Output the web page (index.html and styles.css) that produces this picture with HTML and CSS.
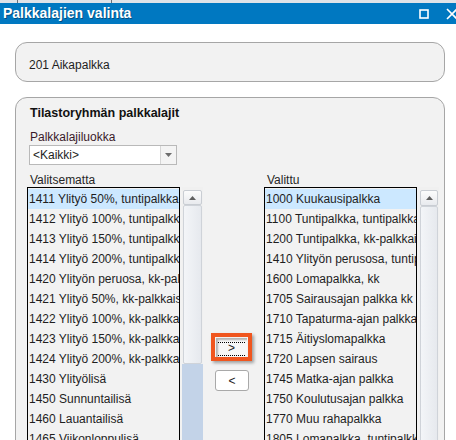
FILE: index.html
```html
<!DOCTYPE html>
<html lang="fi">
<head>
<meta charset="utf-8">
<title>Palkkalajien valinta</title>
<link rel="stylesheet" href="styles.css">
</head>
<body>
<div class="topstrip"><span class="tab tab-a"></span><span class="tab tab-b"></span></div>
<div class="titlebar">
  <span class="title">Palkkalajien valinta</span>
  <div class="winbtns">
    <svg class="ic-max" width="10" height="10" viewBox="0 0 10 10"><rect x="1" y="1" width="8" height="8" fill="none" stroke="#fff" stroke-width="1.6"/></svg>
    <svg class="ic-close" width="12" height="12" viewBox="0 0 12 12"><path d="M1 1 L11 11 M11 1 L1 11" stroke="#fff" stroke-width="1.6" fill="none"/></svg>
  </div>
</div>
<div class="content">
  <div class="group g1"><span class="g1-text">201 Aikapalkka</span></div>
  <div class="group g2">
    <div class="gtitle">Tilastoryhmän palkkalajit</div>
    <div class="label label-class">Palkkalajiluokka</div>
    <div class="combo">
      <span class="combo-text">&lt;Kaikki&gt;</span>
      <span class="combo-btn"><svg width="7" height="4" viewBox="0 0 7 4"><path d="M0 0 H7 L3.5 4 Z" fill="#6d6d6d"/></svg></span>
    </div>
    <div class="picker">
      <div class="pane pane-left">
        <div class="label">Valitsematta</div>
        <div class="listrow">
          <ul class="list">
            <li class="sel">1411 Ylityö 50%, tuntipalkkaiset</li>
            <li>1412 Ylityö 100%, tuntipalkkaiset</li>
            <li>1413 Ylityö 150%, tuntipalkkaiset</li>
            <li>1414 Ylityö 200%, tuntipalkkaiset</li>
            <li>1420 Ylityön peruosa, kk-palkkaiset</li>
            <li>1421 Ylityö 50%, kk-palkkaiset</li>
            <li>1422 Ylityö 100%, kk-palkkaiset</li>
            <li>1423 Ylityö 150%, kk-palkkaiset</li>
            <li>1424 Ylityö 200%, kk-palkkaiset</li>
            <li>1430 Ylityölisä</li>
            <li>1450 Sunnuntailisä</li>
            <li>1460 Lauantailisä</li>
            <li>1465 Viikonloppulisä</li>
          </ul>
          <div class="scroll scroll-left">
            <div class="sb-up"><svg width="7" height="4" viewBox="0 0 7 4"><path d="M0 4 H7 L3.5 0 Z" fill="#606060"/></svg></div>
            <div class="sb-thumb sb-thumb-left"></div>
            <div class="sb-track"></div>
          </div>
        </div>
      </div>
      <div class="movers">
        <div class="highlight">
          <div class="btn btn-add"><span class="focus">&gt;</span></div>
        </div>
        <div class="btn btn-remove">&lt;</div>
      </div>
      <div class="pane pane-right">
        <div class="label">Valittu</div>
        <div class="listrow">
          <ul class="list">
            <li class="sel">1000 Kuukausipalkka</li>
            <li>1100 Tuntipalkka, tuntipalkkaiset</li>
            <li>1200 Tuntipalkka, kk-palkkaiset</li>
            <li>1410 Ylityön perusosa, tuntipalkkaiset</li>
            <li>1600 Lomapalkka, kk</li>
            <li>1705 Sairausajan palkka kk</li>
            <li>1710 Tapaturma-ajan palkka</li>
            <li>1715 Äitiyslomapalkka</li>
            <li>1720 Lapsen sairaus</li>
            <li>1745 Matka-ajan palkka</li>
            <li>1750 Koulutusajan palkka</li>
            <li>1770 Muu rahapalkka</li>
            <li>1805 Lomapalkka, tuntipalkkaiset</li>
          </ul>
          <div class="scroll scroll-right">
            <div class="sb-up"><svg width="7" height="4" viewBox="0 0 7 4"><path d="M0 4 H7 L3.5 0 Z" fill="#606060"/></svg></div>
            <div class="sb-thumb sb-thumb-right"></div>
          </div>
        </div>
      </div>
    </div>
  </div>
</div>
</body>
</html>
```

FILE: styles.css
```css
html, body {
  margin: 0;
  padding: 0;
  width: 456px;
  height: 440px;
  overflow: hidden;
  background: #ffffff;
  font-family: "Liberation Sans", Arial, sans-serif;
  font-size: 12px;
  color: #1e1e1e;
}

.topstrip {
  height: 3px;
  background: #dfe3e8;
  display: flex;
}
.tab {
  width: 1px;
  height: 3px;
  background: #6a6f78;
}
.tab-a { margin-left: 17px; }
.tab-b { margin-left: 93px; }

.titlebar {
  height: 21px;
  background: #0078c1;
  display: flex;
  align-items: center;
  justify-content: space-between;
}
.title {
  margin-left: 3px;
  font-weight: bold;
  font-size: 14px;
  color: #ffffff;
  text-shadow: 1px 1px 0 rgba(0, 0, 0, 0.35);
  line-height: 21px;
}
.winbtns {
  display: flex;
  align-items: center;
  gap: 17px;
  margin-right: -2px;
}
.ic-max { display: block; margin-top: 1px; }
.ic-close { display: block; }

.content {
  height: 398px;
  overflow: hidden;
  padding: 18px 11px 0 15px;
}

.group {
  box-sizing: border-box;
  border: 1px solid #a6a6a6;
  border-radius: 12px;
  background: #f2f2f2;
}
.g1 {
  height: 40px;
  padding: 15px 0 0 13px;
  line-height: 14px;
}

.g2 {
  margin-top: 15px;
  height: 380px;
  padding: 7px 0 0 11px;
}
.gtitle {
  font-weight: bold;
  font-size: 12.5px;
  line-height: 16px;
  margin-left: 3px;
  color: #111;
}
.label {
  line-height: 14px;
  margin-left: 3px;
  color: #262626;
}
.label-class {
  margin-top: 9px;
  color: #3a1a2a;
}

.combo {
  margin-top: 1px;
  margin-left: 2px;
  width: 148px;
  height: 20px;
  box-sizing: border-box;
  border: 1px solid #b9b9b9;
  background: #ffffff;
  display: flex;
  align-items: center;
}
.combo-text {
  flex: 1;
  padding-left: 3px;
  line-height: 18px;
}
.combo-btn {
  width: 15px;
  height: 18px;
  border-left: 1px solid #d6d6d6;
  background: #f4f4f4;
  display: flex;
  align-items: center;
  justify-content: center;
}

.picker {
  margin-top: 8px;
  display: flex;
  align-items: flex-start;
}
.pane-left { width: 176px; }
.pane-right { width: 175px; }

.listrow {
  display: flex;
  align-items: stretch;
}
.list {
  list-style: none;
  margin: 0;
  padding: 1px 0 0 0;
  width: 153px;
  height: 270px;
  box-sizing: border-box;
  border: 1px solid #000000;
  border-bottom: none;
  background: #f2f2f2;
  overflow: hidden;
}
.list li {
  height: 20px;
  line-height: 21px;
  padding-left: 1px;
  white-space: nowrap;
  overflow: hidden;
}
.list li.sel { background: #cce8ff; }

.scroll {
  margin-left: 2px;
  height: 270px;
  display: flex;
  flex-direction: column;
  background: #f0f0f0;
}
.scroll-left { width: 21px; }
.scroll-right { width: 20px; }

.sb-up {
  margin: 3px 1px 0 1px;
  height: 15px;
  box-sizing: border-box;
  border: 1px solid #c9cdd3;
  border-radius: 2px;
  background: linear-gradient(#fcfcfc, #e8eaee);
  display: flex;
  align-items: center;
  justify-content: center;
}
.scroll-right .sb-up { height: 16px; }
.sb-thumb {
  margin: 0 1px;
  box-sizing: border-box;
  border: 1px solid #cfd3d9;
  border-radius: 2px;
  background: linear-gradient(90deg, #f3f5f8, #e6e9ee);
}
.sb-thumb-left { height: 159px; }
.sb-thumb-right { flex: 1; }
.sb-track {
  flex: 1;
  background: #c3d3e8;
}

.movers {
  width: 61px;
  padding-top: 160px;
  display: flex;
  flex-direction: column;
}
.highlight {
  margin-left: 8px;
  width: 41px;
  height: 28px;
  box-sizing: border-box;
  border: 4px solid #f0561f;
  box-shadow: 2px 2px 3px rgba(0, 0, 0, 0.35);
  padding: 1px 1px 0 1px;
}
.btn {
  box-sizing: border-box;
  display: flex;
  align-items: center;
  justify-content: center;
  font-size: 12px;
  color: #222;
}
.btn-add {
  height: 19px;
  background: #f7f7f7;
  box-shadow: inset 2px 2px 2px rgba(0, 0, 0, 0.28);
}
.focus {
  display: block;
  width: 27px;
  height: 12px;
  line-height: 11px;
  margin-top: 2px;
  text-align: center;
  border-top: 1px dotted #000;
  border-bottom: 1px dotted #000;
}
.btn-remove {
  margin-top: 9px;
  margin-left: 12px;
  width: 34px;
  height: 21px;
  border: 1px solid #a9a9a9;
  border-radius: 3px;
  background: #ffffff;
}
```
